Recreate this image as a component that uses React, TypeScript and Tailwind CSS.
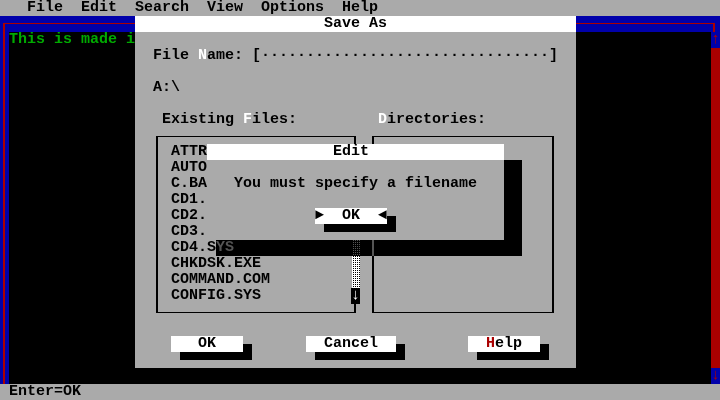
import React from "react";

const files = [
  "ATTRIB.EXE",
  "AUTOEXEC.BAT",
  "C.BAT",
  "CD1.SYS",
  "CD2.SYS",
  "CD3.SYS",
  "CD4.SYS",
  "CHKDSK.EXE",
  "COMMAND.COM",
  "CONFIG.SYS",
];

function Hot({ children }: { children: React.ReactNode }) {
  return <span className="text-white">{children}</span>;
}

function Button({
  width,
  shadow,
  children,
}: {
  width: string;
  shadow: string;
  children: React.ReactNode;
}) {
  return (
    <div className="flex flex-col">
      <div className="flex">
        <div className={`h-4 bg-white text-center whitespace-pre ${width}`}>{children}</div>
        <div className="w-[9px] h-4 flex flex-col">
          <div className="h-2" />
          <div className="h-2 bg-black" />
        </div>
      </div>
      <div className={`ml-[9px] h-2 bg-black ${shadow}`} />
    </div>
  );
}

function SaveAsDialog() {
  return (
    <div className="absolute left-[135px] top-4 w-[441px] h-[352px] bg-[#aaaaaa] text-black">
      <div className="h-4 bg-white text-center">Save As</div>
      <div className="h-4" />
      <div className="h-4 pl-[18px] whitespace-pre">
        File <Hot>N</Hot>ame: [{"·".repeat(32)}]
      </div>
      <div className="h-4" />
      <div className="h-4 pl-[18px]">A:\</div>
      <div className="h-4" />
      <div className="h-4 flex whitespace-pre">
        <span className="pl-[27px] w-[243px]">
          Existing <Hot>F</Hot>iles:
        </span>
        <span>
          <Hot>D</Hot>irectories:
        </span>
      </div>
      <div className="h-[192px] flex items-start gap-4 pt-2 pl-[21px]">
        <div className="w-[200px] h-[177px] border-x-2 border-y border-black flex pt-[7px] pl-[13px]">
          <div className="flex-1">
            {files.map((f) => (
              <div key={f} className="h-4">
                {f}
              </div>
            ))}
          </div>
          <div className="-mr-[6px] w-[9px] flex flex-col">
            <div className="h-[144px] ml-px bg-[conic-gradient(#000_0_25%,#fff_0)] bg-[length:2px_2px]" />
            <div className="h-4 bg-black text-white text-center">↓</div>
          </div>
        </div>
        <div className="w-[182px] h-[177px] border-x-2 border-y border-black" />
      </div>
      <div className="h-4" />
      <div className="h-8 flex pl-[36px]">
        <Button width="w-[72px]" shadow="w-[72px]">
          OK
        </Button>
        <div className="ml-[54px]">
          <Button width="w-[90px]" shadow="w-[90px]">
            Cancel
          </Button>
        </div>
        <div className="ml-[63px]">
          <Button width="w-[72px]" shadow="w-[72px]">
            <span className="text-[#aa0000]">H</span>elp
          </Button>
        </div>
      </div>
    </div>
  );
}

function EditDialog() {
  return (
    <div className="absolute left-[207px] top-[144px] w-[297px] h-24 bg-[#aaaaaa] text-black">
      <div className="h-4 bg-white pl-[126px]">Edit</div>
      <div className="h-4" />
      <div className="h-4 pl-[27px]">You must specify a filename</div>
      <div className="h-4" />
      <div className="pl-[108px]">
        <Button width="w-[72px]" shadow="w-[72px]">
          {"►  OK  ◄"}
        </Button>
      </div>
      {/* shadow: background goes black, text goes dark gray */}
      <div className="absolute left-full top-4 w-[18px] h-20 [backdrop-filter:invert(1)_brightness(0.375)_contrast(1.333)]" />
      <div className="absolute left-[9px] top-full w-[306px] h-4 [backdrop-filter:invert(1)_brightness(0.375)_contrast(1.333)]" />
    </div>
  );
}

export default function App() {
  return (
    <div className="relative w-[720px] h-[400px] overflow-hidden bg-black font-['Liberation_Mono','DejaVu_Sans_Mono',monospace] font-bold text-[15px] leading-4">
      <div className="flex flex-col">
        <div className="h-4 bg-[#aaaaaa] text-black whitespace-pre">
          {"   File  Edit  Search  View  Options  Help"}
        </div>

        <div className="flex h-[368px]">
          <div className="flex-1 bg-[#0000aa] pl-[3px] pt-[7px]">
            <div className="h-full border-l-2 border-t border-[#aa0000] pl-[4px] pt-2">
              <div className="h-full bg-black text-[#00aa00] whitespace-pre">
                This is made in MS-DOS Editor.
              </div>
            </div>
          </div>
          <div className="w-[9px] flex flex-col text-[#aa0000]">
            <div className="h-4 bg-[#0000aa]">
              <div className="mt-[7px] w-[4px] h-[9px] border-t border-r-2 border-[#aa0000]" />
            </div>
            <div className="h-4 bg-[#0000aa] text-center">↑</div>
            <div className="h-[320px] bg-[#aa0000]" />
            <div className="h-4 bg-[#0000aa] text-center">↓</div>
          </div>
        </div>

        <div className="h-4 bg-[#aaaaaa] text-black pl-[9px]">Enter=OK</div>
      </div>

      <SaveAsDialog />
      <EditDialog />
    </div>
  );
}
